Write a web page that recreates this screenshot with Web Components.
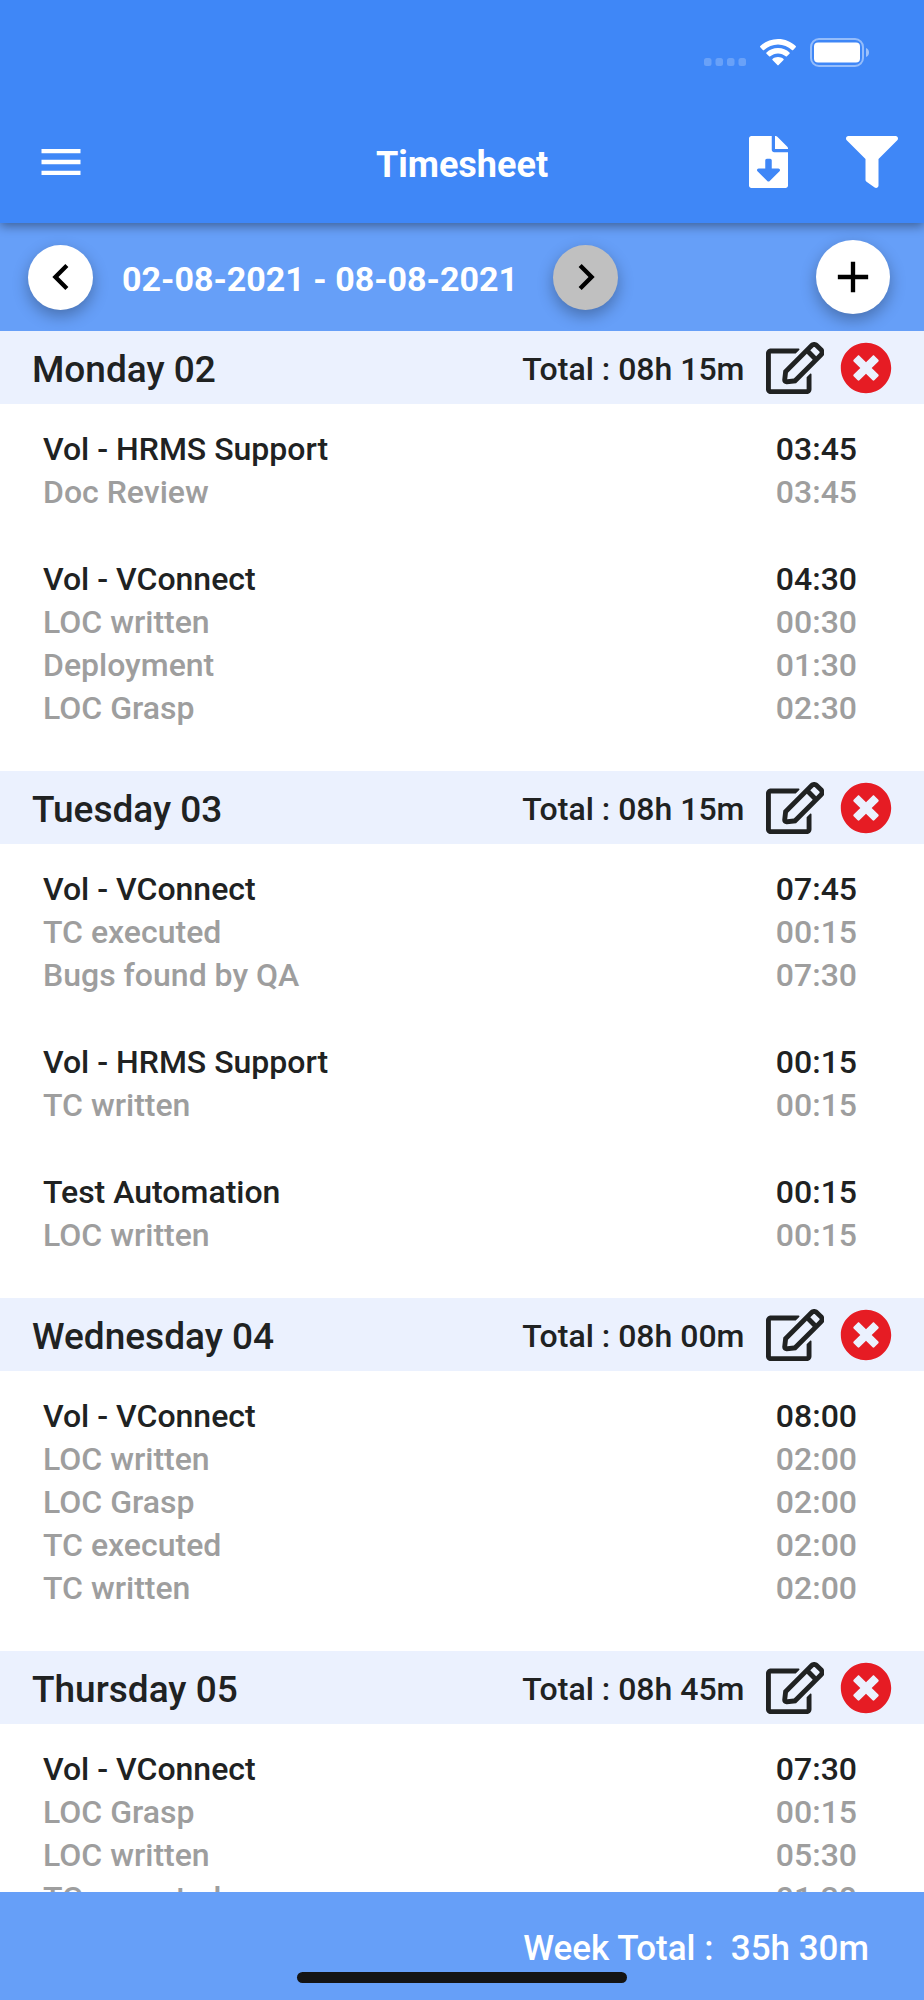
<!DOCTYPE html>
<html lang="en">
<head>
<meta charset="UTF-8">
<meta name="viewport" content="width=device-width, initial-scale=1">
<title>Timesheet</title>
<style>
    html, body {
        margin: 0;
        height: 100%;
    }

    body {
        --primary: #3f87f7;
        --primary-light: #669ff8;
        --day-bg: #ebf1fe;
        --text: #202222;
        --muted: #9e9e9e;
        --danger: #e61c24;
        font-family: Roboto, "Liberation Sans", sans-serif;
        font-weight: 500;
        font-size: 32px;
        color: var(--text);
        background: #fff;
    }
</style>
</head>
<body>
<timesheet-app></timesheet-app>

<script>
// ==================== Icons ====================

const ICONS = {
    menu: ['0 0 24 24', 'M3 18h18v-2H3v2zm0-5h18v-2H3v2zm0-7v2h18V6H3z'],
    prev: ['0 0 24 24', 'M15.41 7.41L14 6l-6 6 6 6 1.41-1.41L10.83 12z'],
    next: ['0 0 24 24', 'M10 6L8.59 7.41 13.17 12l-4.58 4.59L10 18l6-6z'],
    add: ['0 0 24 24', 'M19 13h-6v6h-2v-6H5v-2h6V5h2v6h6v2z'],
    download: ['0 0 384 512', 'M224 136V0H24C10.7 0 0 10.7 0 24v464c0 13.3 10.7 24 24 24h336c13.3 0 24-10.7 24-24V160H248c-13.2 0-24-10.8-24-24zm76.45 211.36l-96.42 95.7c-6.65 6.61-17.39 6.61-24.04 0l-96.42-95.7C73.42 337.29 80.54 320 94.82 320H160v-80c0-8.84 7.16-16 16-16h32c8.84 0 16 7.16 16 16v80h65.18c14.28 0 21.4 17.29 11.27 27.36zM377 105L279.1 7c-4.5-4.5-10.6-7-17-7H256v128h128v-6.1c0-6.3-2.5-12.4-7-16.9z'],
    filter: ['0 0 512 512', 'M487.976 0H24.028C2.71 0-8.047 25.866 7.058 40.971L192 225.941V432c0 7.831 3.821 15.17 10.237 19.662l80 55.98C298.02 518.69 320 507.493 320 487.98V225.941l184.947-184.97C520.021 25.896 509.338 0 487.976 0z'],
    edit: ['0 0 576 512', 'M402.3 344.9l32-32c5-5 13.7-1.5 13.7 5.7V464c0 26.5-21.5 48-48 48H48c-26.5 0-48-21.5-48-48V112c0-26.5 21.5-48 48-48h273.5c7.1 0 10.7 8.6 5.7 13.7l-32 32c-1.5 1.5-3.5 2.3-5.7 2.3H48v352h352V350.5c0-2.1.8-4.1 2.3-5.6zm156.6-201.8L296.3 405.7l-90.4 10c-26.2 2.9-48.5-19.2-45.6-45.6l10-90.4L432.9 17.1c22.9-22.9 59.9-22.9 82.7 0l43.2 43.2c22.9 22.9 22.9 60 .1 82.8zM460.1 174L402 115.9 216.2 301.8l-7.3 65.3 65.3-7.3L460.1 174zm64.8-79.7l-43.2-43.2c-4.1-4.1-10.8-4.1-14.8 0L436 82l58.1 58.1 30.9-30.9c4-4.2 4-10.8-.1-14.9z'],
    remove: ['0 0 512 512', 'M256 8C119 8 8 119 8 256s111 248 248 248 248-111 248-248S393 8 256 8zm121.6 313.1c4.7 4.7 4.7 12.3 0 17L338 377.6c-4.7 4.7-12.3 4.7-17 0L256 312l-65.1 65.6c-4.7 4.7-12.3 4.7-17 0L134.4 338c-4.7-4.7-4.7-12.3 0-17l65.6-65-65.6-65.1c-4.7-4.7-4.7-12.3 0-17l39.6-39.6c4.7-4.7 12.3-4.7 17 0l65 65.7 65.1-65.6c4.7-4.7 12.3-4.7 17 0l39.6 39.6c4.7 4.7 4.7 12.3 0 17L312 256l65.6 65.1z']
};

// ==================== Data ====================

const DAYS = [
    {
        name: 'Monday 02', total: '08h 15m',
        projects: [
            { name: 'Vol - HRMS Support', time: '03:45', tasks: [['Doc Review', '03:45']] },
            { name: 'Vol - VConnect', time: '04:30', tasks: [['LOC written', '00:30'], ['Deployment', '01:30'], ['LOC Grasp', '02:30']] }
        ]
    },
    {
        name: 'Tuesday 03', total: '08h 15m',
        projects: [
            { name: 'Vol - VConnect', time: '07:45', tasks: [['TC executed', '00:15'], ['Bugs found by QA', '07:30']] },
            { name: 'Vol - HRMS Support', time: '00:15', tasks: [['TC written', '00:15']] },
            { name: 'Test Automation', time: '00:15', tasks: [['LOC written', '00:15']] }
        ]
    },
    {
        name: 'Wednesday 04', total: '08h 00m',
        projects: [
            { name: 'Vol - VConnect', time: '08:00', tasks: [['LOC written', '02:00'], ['LOC Grasp', '02:00'], ['TC executed', '02:00'], ['TC written', '02:00']] }
        ]
    },
    {
        name: 'Thursday 05', total: '08h 45m',
        projects: [
            { name: 'Vol - VConnect', time: '07:30', tasks: [['LOC Grasp', '00:15'], ['LOC written', '05:30'], ['TC executed', '01:30']] }
        ]
    }
];

// ==================== IconButton ====================

class IconButton extends HTMLElement {
    constructor() {
        super();
        this.attachShadow({ mode: 'open' });
    }

    connectedCallback() {
        const [viewBox, path] = ICONS[this.getAttribute('icon')];
        this.shadowRoot.innerHTML = `
            <style>
                :host {
                    display: block;
                    flex: none;
                }

                button {
                    display: flex;
                    align-items: center;
                    justify-content: center;
                    box-sizing: border-box;
                    margin: 0;
                    padding: 0;
                    border: none;
                    background: transparent;
                    color: inherit;
                    cursor: pointer;
                }

                svg {
                    display: block;
                    height: 52px;
                    fill: currentColor;
                }

                :host([round]) button {
                    width: var(--size, 65px);
                    height: var(--size, 65px);
                    border-radius: 50%;
                    background: #fff;
                    color: #000;
                    box-shadow: 0 6px 16px rgba(0, 0, 0, 0.3);
                }

                :host([round]) button:disabled {
                    background: #c0c0c0;
                    cursor: default;
                }
            </style>
            <button type="button" aria-label="${this.getAttribute('label')}" ${this.hasAttribute('disabled') ? 'disabled' : ''}>
                <svg viewBox="${viewBox}" aria-hidden="true"><path d="${path}"/></svg>
            </button>
        `;
    }
}

// ==================== StatusBar ====================

class StatusBar extends HTMLElement {
    constructor() {
        super();
        this.attachShadow({ mode: 'open' });
        this.shadowRoot.innerHTML = `
            <style>
                :host {
                    display: flex;
                    align-items: flex-end;
                    justify-content: flex-end;
                    gap: 14px;
                    height: 67px;
                    padding: 0 54px 34px 0;
                }

                svg {
                    display: block;
                    fill: #fff;
                }
            </style>
            <svg width="42" height="9" viewBox="0 0 42 9" opacity="0.22" aria-hidden="true">
                <rect width="7.5" height="8" rx="2.5"/>
                <rect x="11.5" width="7.5" height="8" rx="2.5"/>
                <rect x="23" width="7.5" height="8" rx="2.5"/>
                <rect x="34.5" width="7.5" height="8" rx="2.5"/>
            </svg>
            <svg width="36" height="28" viewBox="0 0 36 28" aria-hidden="true">
                <path d="M18 0C11 0 4.700 2.700.3 7.100a.9.9 0 0 0 0 1.200l2.500 2.600c.4.4.9.4 1.300 0C7.800 7.500 12.700 5.400 18 5.400s10.200 2.100 13.900 5.500c.4.4.9.4 1.300 0l2.500-2.600a.9.900 0 0 0 0-1.200C31.300 2.700 25 0 18 0z"/>
                <path d="M18 9c-4.500 0-8.500 1.700-11.500 4.400a.9.9 0 0 0 0 1.300l2.600 2.600c.4.4.8.3 1.200 0 2.100-1.800 4.800-2.900 7.700-2.900s5.600 1.100 7.700 2.900c.4.300.8.400 1.200 0l2.600-2.600a.9.9 0 0 0 0-1.300C26.500 10.700 22.500 9 18 9z"/>
                <path d="M18 18c-2.100 0-4 .7-5.500 1.900-.4.3-.4.800 0 1.200l4.900 5c.4.400.8.400 1.200 0l4.900-5c.4-.4.4-.9 0-1.200C22 18.700 20.100 18 18 18z"/>
            </svg>
            <svg width="60" height="29" viewBox="0 0 60 29" aria-hidden="true">
                <rect x="1" y="1" width="52" height="27" rx="8" fill="none" stroke="#fff" stroke-width="2" opacity=".45"/>
                <rect x="4" y="4.500" width="46" height="20" rx="4"/>
                <path d="M56 10c4 1.500 4 7.500 0 9z" opacity=".5"/>
            </svg>
        `;
    }
}

// ==================== AppHeader ====================

class AppHeader extends HTMLElement {
    constructor() {
        super();
        this.attachShadow({ mode: 'open' });
        this.shadowRoot.innerHTML = `
            <style>
                :host {
                    display: block;
                    position: relative;
                    z-index: 1;
                    flex: none;
                    background: var(--primary);
                    color: #fff;
                    box-shadow: 0 3px 10px rgba(0, 0, 0, 0.4);
                }

                .toolbar {
                    display: grid;
                    grid-template-columns: 1fr auto 1fr;
                    align-items: center;
                    height: 122px;
                    padding: 0 26px;
                }

                .start, .end {
                    display: flex;
                    align-items: center;
                    gap: 58px;
                }

                .start {
                    padding-left: 9px;
                }

                .end {
                    justify-content: flex-end;
                }

                h1 {
                    margin: 0;
                    padding-top: 5px;
                    font-size: 36px;
                    font-weight: 700;
                    line-height: 42px;
                }
            </style>
            <status-bar></status-bar>
            <div class="toolbar">
                <div class="start"><slot name="start"></slot></div>
                <h1><slot></slot></h1>
                <div class="end"><slot name="end"></slot></div>
            </div>
        `;
    }
}

// ==================== WeekBar ====================

class WeekBar extends HTMLElement {
    constructor() {
        super();
        this.attachShadow({ mode: 'open' });
        this.shadowRoot.innerHTML = `
            <style>
                :host {
                    display: flex;
                    align-items: center;
                    flex: none;
                    gap: 29px;
                    height: 108px;
                    padding: 0 34px 0 28px;
                    background: var(--primary-light);
                    color: #fff;
                }

                .range {
                    padding: 3px 6px 0 0;
                    font-size: 34px;
                    font-weight: 700;
                    line-height: 42px;
                    white-space: nowrap;
                }

                .add {
                    --size: 74px;
                    margin-left: auto;
                }
            </style>
            <icon-button round icon="prev" label="Previous week"></icon-button>
            <span class="range"><slot></slot></span>
            <icon-button round disabled icon="next" label="Next week"></icon-button>
            <icon-button round class="add" icon="add" label="Add entry"></icon-button>
        `;
    }
}

// ==================== ProjectEntry ====================

class ProjectEntry extends HTMLElement {
    constructor() {
        super();
        this.attachShadow({ mode: 'open' });
    }

    set project(project) {
        const rows = project.tasks.map(([name, time]) => `
            <tr><th scope="row">${name}</th><td>${time}</td></tr>
        `).join('');

        this.shadowRoot.innerHTML = `
            <style>
                :host {
                    display: block;
                }

                table {
                    width: 100%;
                    border-collapse: collapse;
                }

                th, td {
                    padding: 0;
                    font-weight: 500;
                    line-height: 43px;
                    text-align: left;
                }

                td {
                    text-align: right;
                }

                tbody {
                    color: var(--muted);
                }
            </style>
            <table>
                <thead><tr><th scope="col">${project.name}</th><td>${project.time}</td></tr></thead>
                <tbody>${rows}</tbody>
            </table>
        `;
    }
}

// ==================== DayCard ====================

class DayCard extends HTMLElement {
    constructor() {
        super();
        this.attachShadow({ mode: 'open' });
    }

    connectedCallback() {
        this.shadowRoot.innerHTML = `
            <style>
                :host {
                    display: block;
                }

                header {
                    display: flex;
                    align-items: center;
                    height: 73px;
                    padding: 0 32px;
                    background: var(--day-bg);
                }

                h2, .total {
                    margin: 0;
                    padding-top: 3px;
                    font-weight: 500;
                    line-height: 42px;
                    white-space: nowrap;
                }

                h2 {
                    flex: 1;
                    padding-top: 5px;
                    font-size: 37px;
                }

                .total {
                    margin-right: 21px;
                }

                .remove {
                    margin-left: 16px;
                    color: var(--danger);
                }

                .projects {
                    display: flex;
                    flex-direction: column;
                    gap: 44px;
                    padding: 24px 67px 41px 43px;
                }
            </style>
            <header>
                <h2>${this.getAttribute('name')}</h2>
                <span class="total">Total : ${this.getAttribute('total')}</span>
                <icon-button icon="edit" label="Edit day"></icon-button>
                <icon-button class="remove" icon="remove" label="Delete day"></icon-button>
            </header>
            <div class="projects"><slot></slot></div>
        `;
    }
}

// ==================== WeekFooter ====================

class WeekFooter extends HTMLElement {
    constructor() {
        super();
        this.attachShadow({ mode: 'open' });
        this.shadowRoot.innerHTML = `
            <style>
                :host {
                    display: flex;
                    align-items: center;
                    justify-content: flex-end;
                    position: relative;
                    flex: none;
                    height: 108px;
                    padding: 0 55px;
                    background: var(--primary-light);
                    color: #fff;
                }

                .total {
                    padding-top: 5px;
                    font-size: 35px;
                    line-height: 42px;
                    white-space: pre;
                }

                /* home indicator over the bar */
                .home {
                    position: absolute;
                    left: 50%;
                    bottom: 17px;
                    width: 330px;
                    height: 11px;
                    border-radius: 6px;
                    background: #141414;
                    transform: translateX(-50%);
                }
            </style>
            <span class="total"><slot></slot></span>
            <div class="home"></div>
        `;
    }
}

// ==================== TimesheetApp ====================

class TimesheetApp extends HTMLElement {
    constructor() {
        super();
        this.attachShadow({ mode: 'open' });
        this.render();
    }

    render() {
        this.shadowRoot.innerHTML = `
            <style>
                :host {
                    display: flex;
                    flex-direction: column;
                    height: 100vh;
                }

                main {
                    flex: 1;
                    min-height: 0;
                    overflow-y: auto;
                    scrollbar-width: none;
                }
            </style>
            <app-header>
                <icon-button slot="start" icon="menu" label="Menu"></icon-button>
                Timesheet
                <icon-button slot="end" icon="download" label="Download"></icon-button>
                <icon-button slot="end" icon="filter" label="Filter"></icon-button>
            </app-header>
            <week-bar>02-08-2021 - 08-08-2021</week-bar>
            <main></main>
            <week-footer>Week Total :  35h 30m</week-footer>
        `;

        const main = this.shadowRoot.querySelector('main');
        DAYS.forEach(day => {
            const card = document.createElement('day-card');
            card.setAttribute('name', day.name);
            card.setAttribute('total', day.total);
            day.projects.forEach(project => {
                const entry = document.createElement('project-entry');
                entry.project = project;
                card.appendChild(entry);
            });
            main.appendChild(card);
        });
    }
}

customElements.define('icon-button', IconButton);
customElements.define('status-bar', StatusBar);
customElements.define('app-header', AppHeader);
customElements.define('week-bar', WeekBar);
customElements.define('project-entry', ProjectEntry);
customElements.define('day-card', DayCard);
customElements.define('week-footer', WeekFooter);
customElements.define('timesheet-app', TimesheetApp);
</script>
</body>
</html>
